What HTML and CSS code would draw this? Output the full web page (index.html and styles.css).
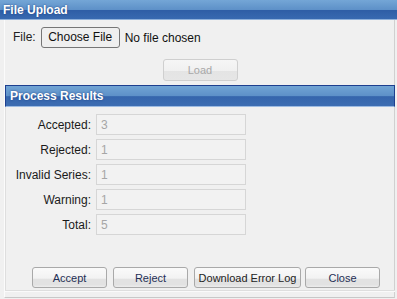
FILE: index.html
```html
<!DOCTYPE html>
<html lang="en">
<head>
    <meta charset="UTF-8">
    <title>File Upload</title>
    <link rel="stylesheet" href="styles.css">
</head>
<body>
    <div class="window">
        <div class="title-bar">File Upload</div>
        <div class="frame">
            <div class="file-row">
                <label class="file-label">File:</label>
                <input type="file" class="file-input">
            </div>
            <div class="load-row">
                <button class="btn" disabled>Load</button>
            </div>

            <div class="panel">
                <div class="panel-title">Process Results</div>
                <div class="results">
                    <label>Accepted:</label><input type="text" value="3" disabled>
                    <label>Rejected:</label><input type="text" value="1" disabled>
                    <label>Invalid Series:</label><input type="text" value="1" disabled>
                    <label>Warning:</label><input type="text" value="1" disabled>
                    <label>Total:</label><input type="text" value="5" disabled>
                </div>
                <div class="actions">
                    <button class="btn">Accept</button>
                    <button class="btn">Reject</button>
                    <button class="btn wide">Download Error Log</button>
                    <button class="btn">Close</button>
                </div>
            </div>
        </div>
    </div>
</body>
</html>
```

FILE: styles.css
```css
body {
    margin: 0;
    background-color: #f0f0f0;
    font-family: 'Liberation Sans', Arial, sans-serif;
    font-size: 12px;
    color: #222;
}
.window {
    width: 397px;
    height: 299px;
    overflow: hidden;
}
.title-bar {
    height: 20px;
    line-height: 20px;
    padding-left: 3px;
    color: #fff;
    font-weight: bold;
    text-shadow: 0 0 2px #1b3f80;
    background: linear-gradient(#74a6d6 0, #5d90c8 52%, #2f5ea6 55%, #3869b0 100%);
    border-bottom: 1px solid #8fb0da;
    box-sizing: border-box;
}
.frame {
    height: 277px;
    margin-left: 4px;
    width: 389px;
    border-left: 1px solid #fbfbfb;
    border-right: 1px solid #d0d0d0;
    border-bottom: 1px solid #c8c8c8;
    display: flex;
    flex-direction: column;
}
.file-row {
    display: flex;
    align-items: center;
    height: 22px;
    margin-top: 6px;
    padding-left: 8px;
}
.file-label {
    margin-right: 5px;
}
.file-input {
    font-family: 'Liberation Sans', Arial, sans-serif;
    font-size: 12px;
    color: #111;
}
.file-input::file-selector-button {
    font-family: 'Liberation Sans', Arial, sans-serif;
    font-size: 12px;
    height: 21px;
    width: 79px;
    padding: 0;
    margin-right: 5px;
    border: 1px solid #767676;
    border-radius: 3px;
    background-color: #efefef;
    color: #111;
}
.load-row {
    display: flex;
    justify-content: center;
    margin-top: 11px;
    padding-left: 1px;
}
.btn {
    width: 75px;
    height: 22px;
    padding: 0;
    white-space: nowrap;
    font-family: 'Liberation Sans', Arial, sans-serif;
    font-size: 11px;
    color: #1f2f55;
    border: 1px solid #a9a9a9;
    border-radius: 3px;
    background: linear-gradient(#fafafa 0, #f2f2f2 55%, #e2e2e2 56%, #e2e2e2 88%, #ededed 100%);
}
.btn:disabled {
    color: #a8a8a8;
    border-color: #cfcfcf;
    background: linear-gradient(#f6f6f6 0, #f0f0f0 55%, #e4e4e4 56%, #e6e6e6 100%);
}
.btn.wide {
    width: 107px;
    color: #222;
}
.panel {
    margin-top: 4px;
    margin-right: -1px;
    flex: 1;
    display: flex;
    flex-direction: column;
    border-bottom: 1px solid #fafafa;
    margin-bottom: 5px;
    box-shadow: inset 1px 0 0 #dedede, inset 0 -1px 0 #dedede;
}
.panel-title {
    height: 22px;
    line-height: 20px;
    padding-left: 4px;
    color: #fff;
    font-weight: bold;
    text-shadow: 0 0 2px #1b3f80;
    background: linear-gradient(#71a4d4 0, #5d90c8 50%, #3565ac 53%, #3d6db2 100%);
    border: 1px solid #1d3f8f;
    border-bottom-color: #9dbbe2;
    box-sizing: border-box;
}
.results {
    display: grid;
    grid-template-columns: 85px 150px;
    column-gap: 5px;
    row-gap: 4px;
    align-items: center;
    margin-top: 7px;
    padding-left: 1px;
}
.results label {
    text-align: right;
    color: #1a1a1a;
}
.results input {
    height: 21px;
    box-sizing: border-box;
    padding: 0 4px;
    border: 1px solid #d6d6d6;
    background-color: #f2f2f2;
    font-family: 'Liberation Sans', Arial, sans-serif;
    font-size: 12px;
    color: #a6a6a6;
}
.actions {
    margin-top: auto;
    margin-bottom: 3px;
    display: flex;
    gap: 6px;
    padding-left: 27px;
}
.actions .btn {
    height: 21px;
}
.actions .btn.wide {
    margin-right: -2px;
}
```
